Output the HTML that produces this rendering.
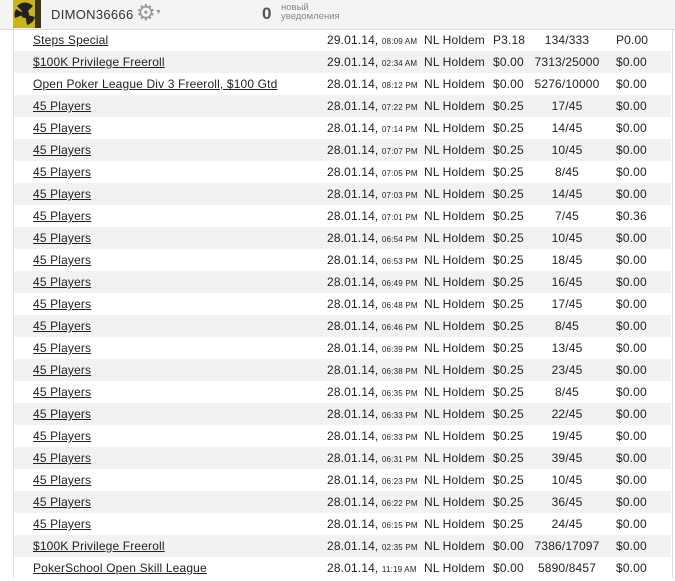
<!DOCTYPE html><html><head><style>
body{margin:0;width:675px;height:578px;overflow:hidden;background:#fff;font-family:"Liberation Sans",sans-serif;color:#222}
.hdr{position:absolute;left:0;top:0;width:675px;height:29px;background:#f4f4f4;border-bottom:1px solid #dcdcdc}
.av{position:absolute;left:13px;top:0;width:28px;height:28px;background:#b8a81a;overflow:hidden}
.nm{position:absolute;left:51px;top:7px;font-size:13px;color:#333;letter-spacing:.3px}
.gear{position:absolute;left:136px;top:0px;font-size:22px;color:#999}
.car{position:absolute;left:155px;top:9px;font-size:7px;color:#999}
.z{position:absolute;left:262px;top:4px;font-size:17px;font-weight:bold;color:#555}
.nt{position:absolute;left:281px;top:3px;font-size:9.5px;line-height:9px;color:#888}
.panel{position:absolute;left:13px;top:30px;width:658px;height:548px;border-left:1px solid #ddd;border-right:1px solid #ddd}
.r{position:absolute;left:14px;width:657px;height:22px;font-size:12px;line-height:22px;letter-spacing:.15px}
.r.g{background:#f2f2f2}
.r span{position:absolute;top:0;white-space:nowrap}
.a{left:19px;text-decoration:underline;color:#222}
.d{left:313px}.d small{font-size:8px;letter-spacing:.2px}
.t{left:410px}.b{left:479px}.p{left:500px;width:106px;text-align:center}.w{left:602px}
</style></head><body>
<div class="hdr"><div class="av"><svg width="28" height="28"><rect width="28" height="28" fill="#c8b41c"/><circle cx="12" cy="14" r="4" fill="#222"/><path d="M12 14 L4 6 A11 11 0 0 1 20 6Z M12 14 L22 17 A11 11 0 0 1 14 25Z M12 14 L2 18 A11 11 0 0 1 3 9Z" fill="#222"/><rect x="22" y="0" width="6" height="28" fill="#3a3410"/></svg></div><div class="nm">DIMON36666</div><div class="gear">⚙</div><div class="car">▼</div><div class="z">0</div><div class="nt">новый<br>уведомления</div></div>
<div class="panel"></div>
<div id="rows"></div>
<script>
var d=[["Steps Special","29.01.14,","08:09 AM","P3.18","134/333","P0.00"],
["$100K Privilege Freeroll","29.01.14,","02:34 AM","$0.00","7313/25000","$0.00"],
["Open Poker League Div 3 Freeroll, $100 Gtd","28.01.14,","08:12 PM","$0.00","5276/10000","$0.00"],
["45 Players","28.01.14,","07:22 PM","$0.25","17/45","$0.00"],
["45 Players","28.01.14,","07:14 PM","$0.25","14/45","$0.00"],
["45 Players","28.01.14,","07:07 PM","$0.25","10/45","$0.00"],
["45 Players","28.01.14,","07:05 PM","$0.25","8/45","$0.00"],
["45 Players","28.01.14,","07:03 PM","$0.25","14/45","$0.00"],
["45 Players","28.01.14,","07:01 PM","$0.25","7/45","$0.36"],
["45 Players","28.01.14,","06:54 PM","$0.25","10/45","$0.00"],
["45 Players","28.01.14,","06:53 PM","$0.25","18/45","$0.00"],
["45 Players","28.01.14,","06:49 PM","$0.25","16/45","$0.00"],
["45 Players","28.01.14,","06:48 PM","$0.25","17/45","$0.00"],
["45 Players","28.01.14,","06:46 PM","$0.25","8/45","$0.00"],
["45 Players","28.01.14,","06:39 PM","$0.25","13/45","$0.00"],
["45 Players","28.01.14,","06:38 PM","$0.25","23/45","$0.00"],
["45 Players","28.01.14,","06:35 PM","$0.25","8/45","$0.00"],
["45 Players","28.01.14,","06:33 PM","$0.25","22/45","$0.00"],
["45 Players","28.01.14,","06:33 PM","$0.25","19/45","$0.00"],
["45 Players","28.01.14,","06:31 PM","$0.25","39/45","$0.00"],
["45 Players","28.01.14,","06:23 PM","$0.25","10/45","$0.00"],
["45 Players","28.01.14,","06:22 PM","$0.25","36/45","$0.00"],
["45 Players","28.01.14,","06:15 PM","$0.25","24/45","$0.00"],
["$100K Privilege Freeroll","28.01.14,","02:35 PM","$0.00","7386/17097","$0.00"],
["PokerSchool Open Skill League","28.01.14,","11:19 AM","$0.00","5890/8457","$0.00"]];
var h="";d.forEach(function(x,i){h+='<div class="r'+(i%2?' g':'')+'" style="top:'+(29+i*22)+'px"><span class="a">'+x[0]+'</span><span class="d">'+x[1]+' <small>'+x[2]+'</small></span><span class="t">NL Holdem</span><span class="b">'+x[3]+'</span><span class="p">'+x[4]+'</span><span class="w">'+x[5]+'</span></div>'});
document.getElementById("rows").innerHTML=h;
</script>
</body></html>
